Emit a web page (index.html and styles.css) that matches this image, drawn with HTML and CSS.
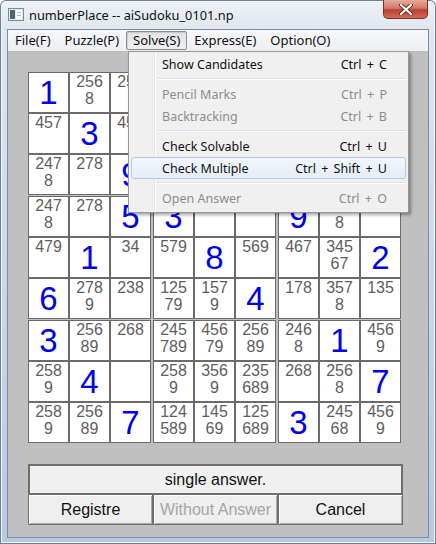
FILE: index.html
```html
<!DOCTYPE html>
<html lang="en">
<head>
    <meta charset="UTF-8">
    <meta name="viewport" content="width=device-width, initial-scale=1.0">
    <title>numberPlace -- aiSudoku_0101.np</title>
    <link rel="stylesheet" href="styles.css">
</head>
<body>
<div class="window">
    <div class="titlebar">
        <svg class="app-icon" width="16" height="13" viewBox="0 0 16 13">
            <rect x="0.5" y="0.5" width="15" height="12" fill="#e4e9ee" stroke="#7d8a8f"/>
            <rect x="2" y="2" width="5" height="9" fill="#4d6a5e"/>
            <rect x="8" y="2" width="6" height="9" fill="#ffffff"/>
            <rect x="9" y="4" width="4" height="1" fill="#a9c3d6"/>
            <rect x="9" y="7" width="4" height="1" fill="#a9c3d6"/>
        </svg>
        <span class="title">numberPlace -- aiSudoku_0101.np</span>
        <div class="close-btn">
            <svg width="14" height="11" viewBox="0 0 14 11">
                <path d="M2 1 L12 10 M12 1 L2 10" stroke="#6b2a22" stroke-width="4" stroke-linecap="round"/>
                <path d="M2 1 L12 10 M12 1 L2 10" stroke="#ffffff" stroke-width="2.2" stroke-linecap="round"/>
            </svg>
        </div>
    </div>

    <div class="client">
        <div class="menubar">
            <span class="menu-item">File(F)</span>
            <span class="menu-item">Puzzle(P)</span>
            <span class="menu-item open">Solve(S)</span>
            <span class="menu-item">Express(E)</span>
            <span class="menu-item">Option(O)</span>
        </div>

        <div class="content">
            <div class="board">
                <!-- box 1 -->
                <div class="box">
                    <div class="cell given">1</div>
                    <div class="cell">256<br>8</div>
                    <div class="cell">256</div>
                    <div class="cell">457</div>
                    <div class="cell given">3</div>
                    <div class="cell">456</div>
                    <div class="cell">247<br>8</div>
                    <div class="cell">278</div>
                    <div class="cell given">9</div>
                </div>
                <!-- box 2 -->
                <div class="box">
                    <div class="cell">479</div>
                    <div class="cell given">6</div>
                    <div class="cell">247<br>9</div>
                    <div class="cell">179</div>
                    <div class="cell given">2</div>
                    <div class="cell">179</div>
                    <div class="cell">158</div>
                    <div class="cell">147</div>
                    <div class="cell">145<br>7</div>
                </div>
                <!-- box 3 -->
                <div class="box">
                    <div class="cell">245<br>8</div>
                    <div class="cell given">7</div>
                    <div class="cell">458</div>
                    <div class="cell">568</div>
                    <div class="cell">459</div>
                    <div class="cell">568</div>
                    <div class="cell">258</div>
                    <div class="cell">245<br>8</div>
                    <div class="cell given">3</div>
                </div>
                <!-- box 4 -->
                <div class="box">
                    <div class="cell">247<br>8</div>
                    <div class="cell">278</div>
                    <div class="cell given">5</div>
                    <div class="cell">479</div>
                    <div class="cell given">1</div>
                    <div class="cell">34</div>
                    <div class="cell given">6</div>
                    <div class="cell">278<br>9</div>
                    <div class="cell">238</div>
                </div>
                <!-- box 5 -->
                <div class="box">
                    <div class="cell given">3</div>
                    <div class="cell">167</div>
                    <div class="cell">126</div>
                    <div class="cell">579</div>
                    <div class="cell given">8</div>
                    <div class="cell">569</div>
                    <div class="cell">125<br>79</div>
                    <div class="cell">157<br>9</div>
                    <div class="cell given">4</div>
                </div>
                <!-- box 6 -->
                <div class="box">
                    <div class="cell given">9</div>
                    <div class="cell">146<br>8</div>
                    <div class="cell">146</div>
                    <div class="cell">467</div>
                    <div class="cell">345<br>67</div>
                    <div class="cell given">2</div>
                    <div class="cell">178</div>
                    <div class="cell">357<br>8</div>
                    <div class="cell">135</div>
                </div>
                <!-- box 7 -->
                <div class="box">
                    <div class="cell given">3</div>
                    <div class="cell">256<br>89</div>
                    <div class="cell">268</div>
                    <div class="cell">258<br>9</div>
                    <div class="cell given">4</div>
                    <div class="cell"></div>
                    <div class="cell">258<br>9</div>
                    <div class="cell">256<br>89</div>
                    <div class="cell given">7</div>
                </div>
                <!-- box 8 -->
                <div class="box">
                    <div class="cell">245<br>789</div>
                    <div class="cell">456<br>79</div>
                    <div class="cell">256<br>89</div>
                    <div class="cell">258<br>9</div>
                    <div class="cell">356<br>9</div>
                    <div class="cell">235<br>689</div>
                    <div class="cell">124<br>589</div>
                    <div class="cell">145<br>69</div>
                    <div class="cell">125<br>689</div>
                </div>
                <!-- box 9 -->
                <div class="box">
                    <div class="cell">246<br>8</div>
                    <div class="cell given">1</div>
                    <div class="cell">456<br>9</div>
                    <div class="cell">268</div>
                    <div class="cell">256<br>8</div>
                    <div class="cell given">7</div>
                    <div class="cell given">3</div>
                    <div class="cell">245<br>68</div>
                    <div class="cell">456<br>9</div>
                </div>
            </div>

            <div class="status">single answer.</div>
            <div class="buttons">
                <button>Registre</button>
                <button disabled>Without Answer</button>
                <button>Cancel</button>
            </div>
        </div>
    </div>

    <div class="dropdown">
        <div class="menu-row"><span>Show Candidates</span><span class="keys">Ctrl + C</span></div>
        <div class="menu-sep"></div>
        <div class="menu-row disabled"><span>Pencil Marks</span><span class="keys">Ctrl + P</span></div>
        <div class="menu-row disabled"><span>Backtracking</span><span class="keys">Ctrl + B</span></div>
        <div class="menu-sep"></div>
        <div class="menu-row"><span>Check Solvable</span><span class="keys">Ctrl + U</span></div>
        <div class="menu-row hover"><span>Check Multiple</span><span class="keys">Ctrl + Shift + U</span></div>
        <div class="menu-sep"></div>
        <div class="menu-row disabled"><span>Open Answer</span><span class="keys">Ctrl + O</span></div>
    </div>
</div>
</body>
</html>
```

FILE: styles.css
```css
* {
    box-sizing: border-box;
}
body {
    margin: 0;
    width: 436px;
    height: 544px;
    overflow: hidden;
    font-family: "Liberation Sans", Arial, sans-serif;
}
.window {
    position: relative;
    width: 436px;
    height: 544px;
    background: linear-gradient(to bottom, #eef2f6 0, #dfe6ee 30px, #c8d5e6 60%, #b9c9e0 100%);
    box-shadow: inset 0 0 0 1px #6f7f98, inset 0 0 0 2px #f4f7fb;
    border-radius: 6px 6px 0 0;
}
.titlebar {
    height: 29px;
    display: flex;
    align-items: center;
    padding-left: 8px;
}
.app-icon {
    margin-right: 5px;
}
.title {
    font-family: "Noto Sans", sans-serif;
    font-size: 12.8px;
    color: #111;
}
.close-btn {
    margin-left: auto;
    margin-right: 8px;
    align-self: flex-start;
    width: 45px;
    height: 19px;
    display: flex;
    align-items: center;
    justify-content: center;
    border: 1px solid #7c2f25;
    border-top: none;
    border-radius: 0 0 5px 5px;
    background: linear-gradient(to bottom, #e9a99c 0, #d27a6b 45%, #bd3f30 55%, #cf6a57 100%);
}

.client {
    margin: 0 7px;
    height: 509px;
    border: 1px solid #7d8ca5;
    background: #c0c0c0;
}
.menubar {
    height: 21px;
    display: flex;
    align-items: center;
    background: linear-gradient(to bottom, #f7f8fa, #eceef1);
    font-family: "Noto Sans", sans-serif;
    font-size: 13px;
    color: #111;
}
.menu-item {
    height: 19px;
    line-height: 17px;
    padding: 0 6px;
    border: 1px solid transparent;
    border-radius: 2px;
}
.menu-item.open {
    border-color: #8b8e92;
    background: linear-gradient(to bottom, #e2e3e5, #eeeff0);
    box-shadow: inset 1px 1px 1px rgba(0, 0, 0, 0.12);
}

.content {
    padding: 21px 0 0 20px;
}
.board {
    display: grid;
    grid-template-columns: repeat(3, 123px);
    column-gap: 2px;
    row-gap: 1px;
}
.box {
    display: grid;
    grid-template-columns: repeat(3, 41px);
    grid-template-rows: repeat(3, 41px);
}
.cell {
    border: 1px solid #6b6b6b;
    background: #fff;
    color: #5e5e5e;
    font-size: 16px;
    line-height: 17px;
    text-align: center;
}
.cell.given {
    color: #0000f0;
    font-size: 33px;
    line-height: 39px;
}

.status {
    margin-top: 21px;
    width: 375px;
    height: 31px;
    border: 2px solid #6e6e6e;
    background: #f0f0f0;
    font-size: 16px;
    line-height: 27px;
    text-align: center;
    color: #111;
}
.buttons {
    display: grid;
    grid-template-columns: repeat(3, 125px);
    width: 375px;
}
.buttons button {
    height: 30px;
    margin: 0;
    padding: 0;
    white-space: nowrap;
    font-family: "Liberation Sans", Arial, sans-serif;
    font-size: 16px;
    color: #111;
    background: #efefef;
    border: 1px solid #6e6e6e;
    border-top: none;
    box-shadow: inset 1px 1px #ffffff, inset -1px -1px #a9a9a9;
}
.buttons button:disabled {
    color: #a6a6a6;
}

.dropdown {
    position: absolute;
    left: 128px;
    top: 51px;
    width: 281px;
    padding: 1px 2px 3px;
    border: 1px solid #979797;
    background: linear-gradient(to right, #f0f0f0 25px, #e2e3e3 25px 26px, #ffffff 26px 27px, #f0f0f0 27px);
    box-shadow: 2px 2px 3px rgba(0, 0, 0, 0.35);
    font-family: "Noto Sans", sans-serif;
    font-size: 12.5px;
    color: #111;
}
.menu-row {
    height: 22px;
    display: flex;
    align-items: center;
    justify-content: space-between;
    padding: 0 18px 0 30px;
    border: 1px solid transparent;
    border-radius: 3px;
}
.menu-row .keys {
    word-spacing: 2px;
}
.menu-row.disabled {
    color: #8d8d8d;
}
.menu-row.hover {
    border-color: #b3cbe6;
    background: linear-gradient(to bottom, #f3f7fc, #e5edf8);
}
.menu-sep {
    height: 8px;
    margin-left: 27px;
    background: linear-gradient(to bottom, transparent 3px, #e0e0e0 3px 4px, #ffffff 4px 5px, transparent 5px);
}
```
